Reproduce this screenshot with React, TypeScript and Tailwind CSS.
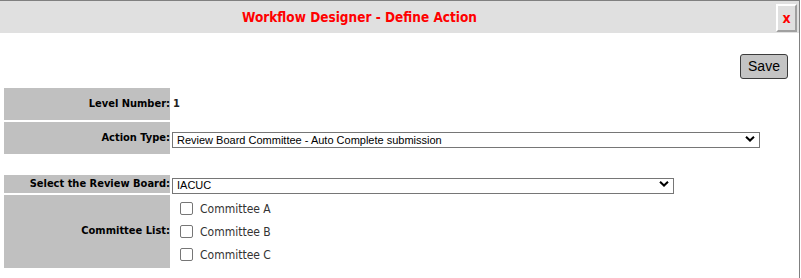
import React from "react";

const Chevron = () => (
  <svg width="10" height="7" viewBox="0 0 10 7" className="absolute right-[5px] top-1/2 -translate-y-1/2 pointer-events-none">
    <path d="M1 1.2 L5 5 L9 1.2" fill="none" stroke="#000" strokeWidth="2" />
  </svg>
);

const label = "text-right font-bold text-[11px] text-black";

export default function App() {
  const font = { fontFamily: '"DejaVu Sans Condensed", "DejaVu Sans", sans-serif' };
  const arial = { fontFamily: '"Liberation Sans", Arial, sans-serif' };
  return (
    <div className="w-[800px] h-[278px] bg-white border-t border-r border-[#808080] overflow-hidden" style={font}>
      <div className="h-[32px] bg-[#e0e0e0] flex items-center relative">
        <div className="flex-1 text-center font-bold text-[13.5px] text-[#ff0000] pr-[80px]">
          Workflow Designer - Define Action
        </div>
        <button className="absolute right-[2px] top-[3px] w-[21px] h-[28px] bg-[#e0e0e0] border-2 border-t-white border-l-white border-b-[#a0a0a0] border-r-[#a0a0a0] text-[#ff0000] text-[14px] font-bold leading-none flex items-center justify-center">
          x
        </button>
      </div>
      <div className="flex justify-end pr-[11px] pt-[21px]">
        <button className="w-[48px] h-[25px] bg-[#c4c4c4] border border-[#3c3c3c] rounded-[3px] text-[14px] text-black" style={arial}>
          Save
        </button>
      </div>
      <div className="pl-[4px] pt-[9px] flex flex-col">
        <div className="flex gap-[2px] h-[32px]">
          <div className={`w-[166px] bg-[#c0c0c0] flex items-center justify-end ${label}`}>Level Number:</div>
          <div className="flex items-center pl-[1px] font-bold text-[11px] text-[#222]">1</div>
        </div>
        <div className="flex gap-[2px] h-[32px] mt-[2px]">
          <div className={`w-[166px] bg-[#c0c0c0] flex items-center justify-end ${label}`}>Action Type:</div>
          <div className="flex items-center pt-[1px]">
            <div className="relative">
              <select
                className="appearance-none w-[588px] h-[16px] border border-[#767676] bg-white text-[11px] leading-none pl-[4px] py-0 text-black outline-none"
                style={arial}
                defaultValue="a"
              >
                <option value="a">Review Board Committee - Auto Complete submission</option>
              </select>
              <Chevron />
            </div>
          </div>
        </div>
        <div className="h-[21px]" />
        <div className="flex gap-[2px] h-[18px]">
          <div className={`w-[166px] bg-[#c0c0c0] flex items-center justify-end ${label}`}>Select the Review Board:</div>
          <div className="flex items-center">
            <div className="relative">
              <select
                className="appearance-none w-[502px] h-[16px] border border-[#767676] bg-white text-[11px] leading-none pl-[4px] py-0 text-black outline-none"
                style={arial}
                defaultValue="i"
              >
                <option value="i">IACUC</option>
              </select>
              <Chevron />
            </div>
          </div>
        </div>
        <div className="flex gap-[2px] h-[73px] mt-[2px]">
          <div className={`w-[166px] bg-[#c0c0c0] flex items-center justify-end ${label}`}>Committee List:</div>
          <div className="flex flex-col pl-[8px] pt-[7px] gap-[10px]">
            {["Committee A", "Committee B", "Committee C"].map((c) => (
              <label key={c} className="flex items-center gap-[7px] h-[13px] text-[12px] text-[#333]">
                <input type="checkbox" className="appearance-none w-[13px] h-[13px] border border-[#767676] rounded-[2px] bg-white m-0" />
                <span>{c}</span>
              </label>
            ))}
          </div>
        </div>
      </div>
    </div>
  );
}
